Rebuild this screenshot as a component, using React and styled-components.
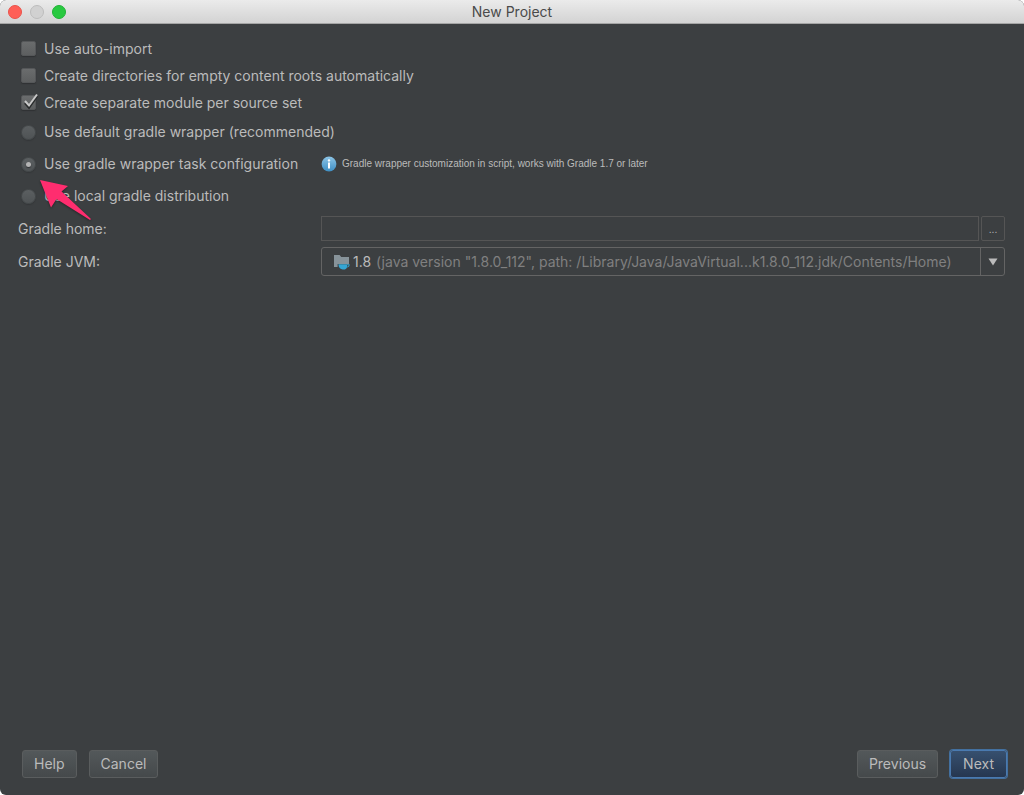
import React, { useState } from 'react'
import styled, { createGlobalStyle, css } from 'styled-components';

function InfoIcon() {
  return (
    <svg width='16' height='16' viewBox='0 0 16 16' aria-hidden='true'>
      <defs>
        <linearGradient id='infoFill' x1='0' y1='0' x2='0' y2='1'>
          <stop offset='0' stopColor='#8cc4e6' />
          <stop offset='1' stopColor='#3f8fc4' />
        </linearGradient>
      </defs>
      <circle cx='8' cy='8' r='7.4' fill='url(#infoFill)' />
      <circle cx='8' cy='4.4' r='1.2' fill='#fff' />
      <path d='M7 6.600h2v6H7z' fill='#fff' />
    </svg>
  )
}

function JdkIcon() {
  return (
    <svg width='18' height='16' viewBox='0 0 18 16' aria-hidden='true'>
      <path d='M1 1h5.6l1.600 2H16v7H4.600v3H1z' fill='#87939a' />
      <path d='M5.400 10.200h11.200v.5c0 1.700-1.200 2.700-2.700 2.700-.6 1.400-1.600 2-2.900 2h-1.200c-2.600 0-4.200-2-4.400-5.200z' fill='#35a6d4' />
      <path d='M14 11.200h1.600c0 .8-.5 1.300-1.600 1.300z' fill='#3c3f41' />
    </svg>
  )
}

function PointerArrow() {
  return (
    <Pointer width='56' height='46' viewBox='0 0 56 46' aria-hidden='true'>
      <path d='M2 2l28 6-6.500 5.500 29.500 27.500-1 1-33.500-21-5.500 8.500z' fill='#ff2d6f' />
    </Pointer>
  )
}

function App() {
  const [checks,setChecks]=useState({autoImport:false,createDirs:false,separateModules:true});
  const [distribution,setDistribution]=useState('task');
  const [gradleHome,setGradleHome]=useState('');

  const toggle=(event)=>{
    setChecks({...checks,[event.target.name]:event.target.checked});
  }

  const onSelect=(event)=>{
    setDistribution(event.target.value);
  }

  return (
    <>
      <GlobalStyle />
      <Window>
        <TitleBar>
          <Lights>
            <Light type='button' aria-label='Close' $color='#ff5f57' $edge='#e9524a' />
            <Light type='button' aria-label='Minimize' $color='#d1d1d1' $edge='#bcbcbc' />
            <Light type='button' aria-label='Zoom' $color='#28c940' $edge='#20b236' />
          </Lights>
          <Title>New Project</Title>
        </TitleBar>
        <Content>
          <Option $height={27}>
            <CheckBox name='autoImport' checked={checks.autoImport} onChange={toggle} />
            Use auto-import
          </Option>
          <Option $height={27}>
            <CheckBox name='createDirs' checked={checks.createDirs} onChange={toggle} />
            Create directories for empty content roots automatically
          </Option>
          <Option $height={27}>
            <CheckBox name='separateModules' checked={checks.separateModules} onChange={toggle} />
            Create separate module per source set
          </Option>
          <Option $height={32}>
            <Radio name='distribution' value='default' checked={distribution==='default'} onChange={onSelect} />
            Use default gradle wrapper (recommended)
          </Option>
          <Row>
            <Option $height={32}>
              <Radio name='distribution' value='task' checked={distribution==='task'} onChange={onSelect} />
              Use gradle wrapper task configuration
            </Option>
            <Hint>
              <InfoIcon />
              Gradle wrapper customization in script, works with Gradle 1.7 or later
            </Hint>
          </Row>
          <Anchor>
            <Option $height={32}>
              <Radio name='distribution' value='local' checked={distribution==='local'} onChange={onSelect} />
              Use local gradle distribution
            </Option>
            <PointerArrow />
          </Anchor>
          <Fields>
            <Row>
              <label htmlFor='gradleHome'>Gradle home:</label>
              <PathField>
                <TextInput id='gradleHome' type='text' value={gradleHome} onChange={(e)=>setGradleHome(e.target.value)} />
                <BrowseButton type='button' aria-label='Browse'>...</BrowseButton>
              </PathField>
            </Row>
            <Row>
              <label htmlFor='gradleJvm'>Gradle JVM:</label>
              <Combo>
                <ComboValue>
                  <JdkIcon />
                  <Version>1.8</Version>
                  <Path>(java version "1.8.0_112", path: /Library/Java/JavaVirtual...k1.8.0_112.jdk/Contents/Home)</Path>
                </ComboValue>
                <ComboArrow>
                  <svg width='10' height='8' viewBox='0 0 10 8' aria-hidden='true'>
                    <path d='M.5.500h9L5 7.500z' fill='#bbbbbb' />
                  </svg>
                </ComboArrow>
                <ComboSelect id='gradleJvm' defaultValue='1.8'>
                  <option value='1.8'>1.8</option>
                </ComboSelect>
              </Combo>
            </Row>
          </Fields>
        </Content>
        <Footer>
          <ButtonGroup>
            <Button type='button'>Help</Button>
            <Button type='button'>Cancel</Button>
          </ButtonGroup>
          <ButtonGroup>
            <Button type='button'>Previous</Button>
            <Button type='button' $primary>Next</Button>
          </ButtonGroup>
        </Footer>
      </Window>
    </>
  )
}

const GlobalStyle=createGlobalStyle`
  *{
    box-sizing:border-box;
  }
  body{
    margin:0;
    background-color:#ffffff;
    color:#bbbbbb;
    font-family:Inter,"Liberation Sans",sans-serif;
    font-size:14px;
    line-height:18px;
  }
  button,input,select{
    font:inherit;
    color:inherit;
    margin:0;
  }
`

const Window=styled.div`
  display:flex;
  flex-direction:column;
  min-height:100vh;
  overflow:hidden;
  border-radius:6px;
  background-color:#3c3f41;
`

const TitleBar=styled.header`
  display:grid;
  grid-template-columns:1fr auto 1fr;
  align-items:center;
  height:24px;
  padding:0 8px;
  background:linear-gradient(#ebebeb,#d3d3d3);
  border-bottom:1px solid #a5a5a5;
`

const Lights=styled.div`
  display:flex;
  gap:8px;
`

const Light=styled.button`
  width:14px;
  height:14px;
  padding:0;
  border:1px solid ${({$edge})=>$edge};
  border-radius:50%;
  background-color:${({$color})=>$color};
`

const Title=styled.h1`
  margin:0;
  color:#4a4a4a;
  font-size:14px;
  font-weight:400;
`

const Content=styled.main`
  flex:1;
  padding:11px 19px 11px 18px;
`

const Option=styled.label`
  display:flex;
  align-items:center;
  gap:8px;
  width:fit-content;
  height:${({$height})=>$height}px;
  padding-left:3px;
  white-space:nowrap;
`

/* the tick is wider than the box and reaches over its top right corner */
const CheckBox=styled.input.attrs({type:'checkbox'})`
  appearance:none;
  position:relative;
  width:15px;
  height:15px;
  border:1px solid #555759;
  border-radius:2px;
  background:linear-gradient(#6a6c6d,#5d5f60);
  box-shadow:0 1px 1px #2f3133;
  &:checked::before{
    content:'';
    position:absolute;
    left:0;
    top:-3px;
    width:18px;
    height:18px;
    background:url("data:image/svg+xml,%3Csvg xmlns='http://www.w3.org/2000/svg' viewBox='0 0 18 18'%3E%3Cpath d='M3 9l4 4.500 8-11.500' fill='none' stroke='%23292b2c' stroke-width='2.500' transform='translate(0 1)'/%3E%3Cpath d='M3 8l4 4.500 8-11' fill='none' stroke='%23c8c8c8' stroke-width='2'/%3E%3C/svg%3E") no-repeat;
  }
`

const Radio=styled.input.attrs({type:'radio'})`
  appearance:none;
  display:grid;
  place-items:center;
  width:15px;
  height:15px;
  border:1px solid #45494b;
  border-radius:50%;
  background:linear-gradient(#5b5f61,#4f5355);
  box-shadow:0 1px 1px #343739;
  &:checked::before{
    content:'';
    width:5px;
    height:5px;
    border-radius:50%;
    background-color:#b4b4b4;
    box-shadow:0 1px 1px #303335;
  }
`

const Row=styled.div`
  display:grid;
  grid-template-columns:303px minmax(0,1fr);
  align-items:center;
`

const Hint=styled.div`
  display:flex;
  align-items:center;
  gap:5px;
  font-family:"Liberation Sans",Arial,sans-serif;
  font-size:10px;
  white-space:nowrap;
`

const Anchor=styled.div`
  position:relative;
`

/* lies over the last radio's caption */
const Pointer=styled.svg`
  position:absolute;
  left:20px;
  top:-2px;
  pointer-events:none;
  filter:drop-shadow(0 1px 1px rgba(0,0,0,0.4));
`

const Fields=styled.div`
  display:flex;
  flex-direction:column;
  gap:6px;
  padding-top:4px;
`

const PathField=styled.div`
  display:flex;
  gap:2px;
`

const TextInput=styled.input`
  flex:1;
  min-width:0;
  height:25px;
  padding:0 6px;
  border:1px solid #555555;
  background-color:transparent;
`

const BrowseButton=styled.button`
  width:24px;
  height:25px;
  padding:0;
  border:1px solid #555555;
  border-radius:2px;
  background-color:transparent;
  font-size:10px;
  line-height:18px;
`

const Combo=styled.div`
  position:relative;
  display:flex;
  height:29px;
  border:1px solid #646464;
  border-radius:3px;
`

const ComboValue=styled.div`
  display:flex;
  flex:1;
  align-items:center;
  min-width:0;
  padding-left:11px;
  overflow:hidden;
  white-space:nowrap;
`

const Version=styled.span`
  padding:0 5px 0 2px;
`

const Path=styled.span`
  color:#808080;
`

const ComboArrow=styled.div`
  display:flex;
  align-items:center;
  justify-content:center;
  width:24px;
  border-left:1px solid #646464;
`

const ComboSelect=styled.select`
  position:absolute;
  inset:0;
  width:100%;
  opacity:0;
  cursor:pointer;
`

const Footer=styled.footer`
  display:flex;
  justify-content:space-between;
  padding:0 17px 17px 22px;
`

const ButtonGroup=styled.div`
  display:flex;
  align-items:center;
  gap:12px;
`

const Button=styled.button`
  height:28px;
  padding:0 11px;
  border:1px solid #5a5d5e;
  border-radius:3px;
  background:linear-gradient(#53585a,#45494b);
  ${({$primary})=>$primary && css`
    border-color:#4a7ab0;
    padding:0 12px;
    background:linear-gradient(#37506f,#263750);
    box-shadow:0 0 0 1px #43709f;
  `}
`

export default App
